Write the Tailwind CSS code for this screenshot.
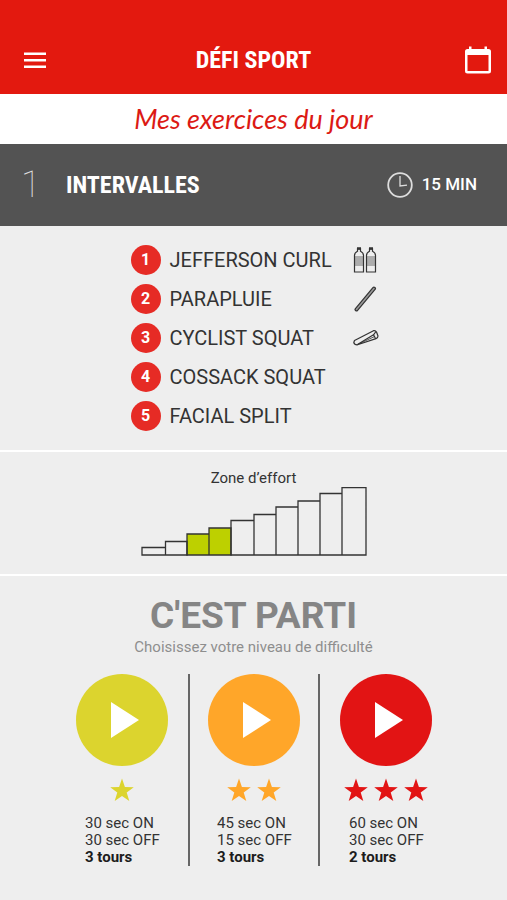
<!DOCTYPE html>
<html lang="fr">
<head>
<meta charset="utf-8">
<meta name="viewport" content="width=device-width, initial-scale=1">
<title>Défi Sport</title>
<script src="https://cdn.jsdelivr.net/npm/@tailwindcss/browser@4"></script>
</head>
<body class="min-h-screen bg-[#eeeeee] font-['Roboto',sans-serif] text-[#333333] antialiased">
<svg class="hidden">
  <symbol id="star" viewBox="0 0 24 24"><path d="M12 0.5 14.9 9 23.8 9.2 16.7 14.5 19.3 23 12 17.9 4.7 23 7.3 14.5 0.2 9.2 9.1 9Z" fill="currentColor"/></symbol>
  <symbol id="play" viewBox="0 0 28 36"><path d="M0 0 28 18 0 36Z" fill="currentColor"/></symbol>
</svg>

<header class="flex items-center justify-between bg-[#e3190f] px-4 pt-7 pb-0.5 text-white">
  <button type="button" aria-label="Menu" class="flex h-16 w-10 items-center pl-2">
    <svg class="h-4 w-[22px]" viewBox="0 0 22 16" fill="currentColor"><path d="M0 0.500h22v2.500H0zM0 7h22v2.500H0zM0 13.500h22v2.500H0z"/></svg>
  </button>
  <h1 class="font-['Roboto_Condensed','Roboto',sans-serif] text-2xl font-bold">DÉFI SPORT</h1>
  <button type="button" aria-label="Calendrier" class="flex h-16 w-10 items-center justify-end">
    <svg class="h-7 w-[26px]" viewBox="0 0 26 28" fill="currentColor"><path fill-rule="evenodd" d="M4 0.500h2.500V3h13V0.500h2.500V3h1.500a2.500 2.500 0 0 1 2.500 2.500v19.500a2.500 2.500 0 0 1-2.500 2.500H2.500a2.500 2.500 0 0 1-2.500-2.500V5.500a2.500 2.500 0 0 1 2.500-2.500h1.500zM2.500 9v16h21V9z"/></svg>
  </button>
</header>

<main>
  <p class="flex h-[50px] items-center justify-center bg-white font-['Lato',cursive] text-[27px] italic text-[#dc1a14]">Mes exercices du jour</p>

  <section class="flex h-[82px] items-center bg-[#535353] pr-[30px] pl-[21px] text-white">
    <span class="w-[45px] text-4xl font-thin text-[#dddddd]">1</span>
    <h2 class="flex-1 font-['Roboto_Condensed','Roboto',sans-serif] text-2xl font-bold">INTERVALLES</h2>
    <svg class="mr-[9px] size-[26px]" viewBox="0 0 26 26" fill="none" stroke="#dddddd"><circle cx="13" cy="13" r="11.800" stroke-width="1.800"/><path d="M13 4v10l7-.8" stroke-width="1.300"/></svg>
    <span class="text-[17px] font-medium">15 MIN</span>
  </section>

  <section class="flex justify-center border-b-2 border-white pt-[19px] pb-[19px] pl-0.5">
    <ol class="grid w-[248px] gap-[9px] text-xl">
      <li class="flex h-[30px] items-center gap-[9px]"><span class="flex size-[30px] items-center justify-center rounded-full bg-[#e62b25] text-base font-bold text-white">1</span><span class="flex-1">JEFFERSON CURL</span>
        <svg class="h-[26px] w-[26px]" viewBox="0 0 26 26" fill="none" stroke="#333" stroke-width="1.200"><path d="M4.500 1.800h3v2.500q3 1.500 3 4.200V25h-9V8.500q0-2.700 3-4.200zM16.500 1.800h3v2.500q3 1.500 3 4.200V25h-9V8.500q0-2.700 3-4.200z"/><path d="M4 1.500h4M16 1.500h4" stroke-width="2.500"/><path d="M1.500 10h9M1.500 12h9M1.500 14h9M1.500 16h9M1.500 18h9M13.500 10h9M13.500 12h9M13.500 14h9M13.500 16h9M13.500 18h9" stroke-width=".7"/></svg></li>
      <li class="flex h-[30px] items-center gap-[9px]"><span class="flex size-[30px] items-center justify-center rounded-full bg-[#e62b25] text-base font-bold text-white">2</span><span class="flex-1">PARAPLUIE</span>
        <svg class="h-[26px] w-[26px]" viewBox="0 0 26 26" fill="none" stroke-linecap="round"><path d="M3.500 23.500 21 2.500" stroke="#333" stroke-width="4"/><path d="M3.500 23.500 21 2.500" stroke="#999" stroke-width="1.600"/></svg></li>
      <li class="flex h-[30px] items-center gap-[9px]"><span class="flex size-[30px] items-center justify-center rounded-full bg-[#e62b25] text-base font-bold text-white">3</span><span class="flex-1">CYCLIST SQUAT</span>
        <svg class="h-[26px] w-[26px]" viewBox="0 0 26 26" fill="none" stroke="#333" stroke-width="1.200" stroke-linejoin="round"><path d="M1.500 15.500 20.500 5.700Q22.500 5.300 23.500 7L25 11Q25 13 23 13.600L4.500 19.800Q1.500 20 .8 17.500ZM4.500 19.500 20.500 9.800 23 6.500M20.500 9.800l2 3.700"/><path d="M4.500 19.500 21 11.800" stroke-width=".8"/></svg></li>
      <li class="flex h-[30px] items-center gap-[9px]"><span class="flex size-[30px] items-center justify-center rounded-full bg-[#e62b25] text-base font-bold text-white">4</span><span class="flex-1">COSSACK SQUAT</span></li>
      <li class="flex h-[30px] items-center gap-[9px]"><span class="flex size-[30px] items-center justify-center rounded-full bg-[#e62b25] text-base font-bold text-white">5</span><span class="flex-1">FACIAL SPLIT</span></li>
    </ol>
  </section>

  <section class="flex flex-col items-center border-b-2 border-white pt-[17px] pb-[17px]">
    <h3 class="text-[15px] leading-[18px]">Zone d’effort</h3>
    <svg class="h-[70px] w-[226px]" viewBox="0 0 226 70" fill="none" stroke="#333" stroke-width="1.300" role="img" aria-label="Zone d’effort 3 à 4 sur 10">
      <path d="M46 68V47h22v21zM68 68V41h22v27z" fill="#bdd000"/>
      <path d="M1 68v-7.500h23.500V68zM24.500 68V54.500H46V68zM90 68V33.500h23V68zM113 68V27.500h22V68zM135 68V20h22v48zM157 68V14h22v54zM179 68V6.500h22V68zM201 68V.700h24V68z"/>
    </svg>
  </section>

  <section class="pt-[18px]">
    <h2 class="text-center text-[37px] leading-[44px] font-bold text-[#858585]">C'EST PARTI</h2>
    <p class="text-center text-[15px] leading-[18px] text-[#8e8e8e]">Choisissez votre niveau de difficulté</p>
    <div class="mx-auto mt-[18px] grid w-[396px] grid-cols-3">
      <article class="flex h-[192px] flex-col items-center">
        <button type="button" aria-label="Niveau 1" class="flex size-[92px] items-center justify-center rounded-full bg-[#dcd42e] pl-1.5 text-white"><svg class="h-9 w-7"><use href="#play"/></svg></button>
        <div class="mt-3 flex gap-1.5 text-[#dcd42e]"><svg class="size-6"><use href="#star"/></svg></div>
        <p class="mt-[13px] w-[73px] text-[15px] leading-[17px] whitespace-nowrap">30 sec ON<br>30 sec OFF<br><b class="text-[#1c1c1c]">3 tours</b></p>
      </article>
      <article class="flex h-[192px] flex-col items-center border-x-2 border-[#666666]">
        <button type="button" aria-label="Niveau 2" class="flex size-[92px] items-center justify-center rounded-full bg-[#ffa629] pl-1.5 text-white"><svg class="h-9 w-7"><use href="#play"/></svg></button>
        <div class="mt-3 flex gap-1.5 text-[#ffa629]"><svg class="size-6"><use href="#star"/></svg><svg class="size-6"><use href="#star"/></svg></div>
        <p class="mt-[13px] w-[73px] text-[15px] leading-[17px] whitespace-nowrap">45 sec ON<br>15 sec OFF<br><b class="text-[#1c1c1c]">3 tours</b></p>
      </article>
      <article class="flex h-[192px] flex-col items-center">
        <button type="button" aria-label="Niveau 3" class="flex size-[92px] items-center justify-center rounded-full bg-[#e21414] pl-1.5 text-white"><svg class="h-9 w-7"><use href="#play"/></svg></button>
        <div class="mt-3 flex gap-1.5 text-[#e21414]"><svg class="size-6"><use href="#star"/></svg><svg class="size-6"><use href="#star"/></svg><svg class="size-6"><use href="#star"/></svg></div>
        <p class="mt-[13px] w-[73px] text-[15px] leading-[17px] whitespace-nowrap">60 sec ON<br>30 sec OFF<br><b class="text-[#1c1c1c]">2 tours</b></p>
      </article>
    </div>
  </section>
</main>
</body>
</html>
